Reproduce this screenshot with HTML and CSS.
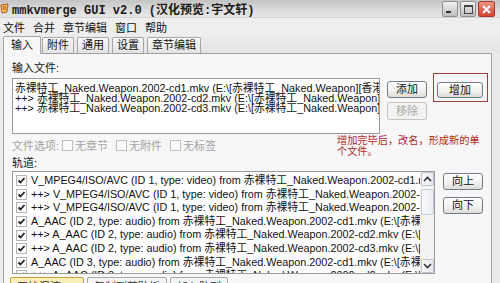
FILE: index.html
```html
<!DOCTYPE html>
<html lang="zh-CN">
<head>
  <meta charset="UTF-8">
  <title>mmkvmerge GUI v2.0</title>
  <link rel="stylesheet" href="styles.css">
</head>
<body>
  <div class="window">
    <div class="titlebar">
      <svg class="app-icon" width="9" height="11" viewBox="0 0 9 11">
        <path d="M1 2 L8 1 L7 9 L2 10 Z" fill="#f3c54a" stroke="#b7572c" stroke-width="1"/>
        <path d="M3 4 L6 4 M3 6 L6 6" stroke="#c0392b" stroke-width="1"/>
      </svg>
      <span class="title">mmkvmerge GUI v2.0 (汉化预览:宇文轩)</span>
      <div class="caption-btns">
        <span class="cap min"><i></i></span>
        <span class="cap max"><i></i></span>
        <span class="cap close">
          <svg width="11" height="11" viewBox="0 0 11 11"><path d="M2 2 L9 9 M9 2 L2 9" stroke="#fff" stroke-width="2"/></svg>
        </span>
      </div>
    </div>

    <div class="menubar">
      <span>文件</span>
      <span>合并</span>
      <span>章节编辑</span>
      <span>窗口</span>
      <span>帮助</span>
    </div>

    <div class="tabs">
      <span class="tab active">输入</span>
      <span class="tab">附件</span>
      <span class="tab">通用</span>
      <span class="tab">设置</span>
      <span class="tab">章节编辑</span>
    </div>

    <div class="panel">
      <div class="label">输入文件:</div>
      <div class="files-row">
        <div class="listbox files">
          <div class="line">赤裸特工_Naked.Weapon.2002-cd1.mkv (E:\[赤裸特工_Naked.Weapon][香港..]</div>
          <div class="line">++&gt; 赤裸特工_Naked.Weapon.2002-cd2.mkv (E:\[赤裸特工_Naked.Weapon][香</div>
          <div class="line">++&gt; 赤裸特工_Naked.Weapon.2002-cd3.mkv (E:\[赤裸特工_Naked.Weapon][香</div>
        </div>
        <div class="btn-col">
          <button class="btn">添加</button>
          <button class="btn" disabled>移除</button>
        </div>
        <div class="mark-box">
          <button class="btn wide">增加</button>
        </div>
      </div>

      <div class="options">
        <span class="opt-label">文件选项:</span>
        <span class="opt"><span class="box"></span>无章节</span>
        <span class="opt"><span class="box"></span>无附件</span>
        <span class="opt"><span class="box"></span>无标签</span>
      </div>

      <div class="label tracks-label">轨道:</div>
      <div class="tracks-row">
        <div class="listbox tracks">
          <div class="rows">
            <div class="track"><span class="check"></span>V_MPEG4/ISO/AVC (ID 1, type: video) from 赤裸特工_Naked.Weapon.2002-cd1.mkv</div>
            <div class="track"><span class="check"></span>++&gt; V_MPEG4/ISO/AVC (ID 1, type: video) from 赤裸特工_Naked.Weapon.2002-cd2</div>
            <div class="track"><span class="check"></span>++&gt; V_MPEG4/ISO/AVC (ID 1, type: video) from 赤裸特工_Naked.Weapon.2002-cd3</div>
            <div class="track"><span class="check"></span>A_AAC (ID 2, type: audio) from 赤裸特工_Naked.Weapon.2002-cd1.mkv (E:\[赤裸特</div>
            <div class="track"><span class="check"></span>++&gt; A_AAC (ID 2, type: audio) from 赤裸特工_Naked.Weapon.2002-cd2.mkv (E:\[赤</div>
            <div class="track"><span class="check"></span>++&gt; A_AAC (ID 2, type: audio) from 赤裸特工_Naked.Weapon.2002-cd3.mkv (E:\[赤</div>
            <div class="track"><span class="check"></span>A_AAC (ID 3, type: audio) from 赤裸特工_Naked.Weapon.2002-cd1.mkv (E:\[赤裸特</div>
            <div class="track"><span class="check"></span>++&gt; A_AAC (ID 3, type: audio) from 赤裸特工_Naked.Weapon.2002-cd2.mkv (E:\[赤</div>
          </div>
          <div class="scrollbar">
            <span class="arrow">
              <svg width="9" height="6" viewBox="0 0 9 6"><path d="M1 5 L4.5 1.5 L8 5" fill="none" stroke="#333" stroke-width="1.6"/></svg>
            </span>
            <span class="thumb"></span>
            <span class="track-fill"></span>
            <span class="arrow">
              <svg width="9" height="6" viewBox="0 0 9 6"><path d="M1 1 L4.5 4.5 L8 1" fill="none" stroke="#333" stroke-width="1.6"/></svg>
            </span>
          </div>
        </div>
        <div class="btn-col move">
          <button class="btn">向上</button>
          <button class="btn">向下</button>
        </div>
      </div>

      <div class="bottom-tabs">
        <span class="btab hot">开始混流</span>
        <span class="btab">复制到剪贴板</span>
        <span class="btab">加入队列</span>
      </div>

      <div class="note">增加完毕后，改名，形成新的单<br>个文件。</div>
    </div>
  </div>
</body>
</html>
```

FILE: styles.css
```css
body {
  margin: 0;
  font-family: "Liberation Sans", "Noto Sans CJK SC", sans-serif;
  font-size: 11px;
  color: #111;
  background: #e9e9e9;
}
.window {
  width: 500px;
  height: 283px;
  overflow: hidden;
  background: #ebebeb;
}

/* title bar */
.titlebar {
  height: 18px;
  display: flex;
  align-items: center;
  background: linear-gradient(to bottom, #c4c4c4, #dcdcdc 60%, #e6e6e6);
  border-bottom: 1px solid #d2d2d2;
  box-sizing: border-box;
}
.app-icon {
  margin: 0 3px 0 0;
}
.title {
  font-family: "Liberation Mono", "Noto Sans CJK SC", monospace;
  font-weight: bold;
  font-size: 12px;
  color: #1a1a1a;
}
.caption-btns {
  margin-left: auto;
  margin-right: 5px;
  display: flex;
  gap: 2px;
  height: 16px;
  align-self: flex-start;
  margin-top: 1px;
}
.cap {
  width: 16px;
  height: 16px;
  box-sizing: border-box;
  border: 1px solid #8d8d8d;
  border-radius: 2px;
  background: linear-gradient(to bottom, #f2f2f2, #bdbdbd);
  display: flex;
  align-items: center;
  justify-content: center;
  position: relative;
}
.cap.min i {
  position: absolute;
  left: 3px;
  bottom: 3px;
  width: 5px;
  height: 2px;
  background: #333;
}
.cap.max i {
  width: 7px;
  height: 6px;
  border: 1px solid #444;
  border-top-width: 2px;
}
.cap.close {
  width: 17px;
  border-color: #a6382c;
  background: linear-gradient(to bottom, #f19282, #d2432f);
}

/* menu */
.menubar {
  height: 17px;
  display: flex;
  align-items: center;
  gap: 8px;
  padding-left: 3px;
  background: #eeeeee;
}

/* tabs */
.tabs {
  height: 18px;
  display: flex;
  align-items: flex-end;
  gap: 3px;
  padding-left: 3px;
  background: linear-gradient(to bottom, #ececec, #e4e4e4);
}
.tab {
  height: 15px;
  line-height: 14px;
  padding: 0 4px;
  border: 1px solid #a7a7a7;
  border-bottom: none;
  border-radius: 2px 2px 0 0;
  background: linear-gradient(to bottom, #fbfbfb, #e2e2e2);
}
.tab.active {
  height: 17px;
  line-height: 16px;
  padding: 0 7px;
  margin-right: -2px;
  margin-bottom: -1px;
  background: #f7f7f7;
  position: relative;
  z-index: 1;
}

/* tab page */
.panel {
  position: relative;
  margin-left: 3px;
  width: 489px;
  box-sizing: border-box;
  border: 1px solid #a0a0a0;
  background: #f7f7f7;
  padding: 8px 2px 0 8px;
}
.label {
  line-height: 12px;
  height: 12px;
}
.files-row {
  display: flex;
  align-items: flex-start;
  margin-top: 4px;
}
.listbox {
  background: #fff;
  border: 1px solid #9a9a9a;
  box-sizing: border-box;
  overflow: hidden;
  font-size: 10.8px;
}
.files {
  width: 368px;
  height: 56px;
  padding: 4px 2px;
  flex: none;
}
.line {
  line-height: 10px;
  height: 10px;
  white-space: nowrap;
}
.btn-col {
  display: flex;
  flex-direction: column;
  gap: 4px;
  margin: 3px 0 0 7px;
  width: 40px;
}
.btn {
  font-family: "Liberation Sans", "Noto Sans CJK SC", sans-serif;
  font-size: 11px;
  height: 17px;
  padding: 0;
  border: 1px solid #6f7d8c;
  border-radius: 3px;
  background: linear-gradient(to bottom, #ffffff, #f0f0ee 60%, #dcdcd6);
  color: #111;
  line-height: 15px;
}
.btn:disabled {
  border-color: #c4c4bd;
  color: #a8a8a8;
  background: #f2f2f0;
  height: 18px;
}
.mark-box {
  margin: -5px 0 0 6px;
  border: 1px solid #9c3f3a;
  padding: 8px 4px 3px 3px;
  display: flex;
}
.btn.wide {
  width: 46px;
  height: 16px;
}

/* file options */
.options {
  display: flex;
  align-items: center;
  height: 12px;
  margin-top: 5px;
  color: #a3a3a3;
}
.opt-label {
  margin-right: 3px;
}
.opt {
  display: flex;
  align-items: center;
  gap: 2px;
  margin-right: 8px;
}
.box {
  width: 9px;
  height: 9px;
  border: 1px solid #bdbdbd;
  background: #fbfbfb;
}
.tracks-label {
  margin-top: 6px;
}

/* tracks */
.tracks-row {
  display: flex;
  align-items: flex-start;
  margin-top: 2px;
}
.tracks {
  width: 423px;
  height: 103px;
  display: flex;
  flex: none;
}
.rows {
  flex: 1;
  min-width: 0;
  padding: 2px 0 0 3px;
  overflow: hidden;
}
.track {
  height: 13.6px;
  line-height: 13.6px;
  white-space: nowrap;
  display: flex;
  align-items: center;
  gap: 4px;
}
.check {
  flex: none;
  width: 9px;
  height: 9px;
  border: 1px solid #b4b4b4;
  background: #fff url("data:image/svg+xml,%3Csvg xmlns='http://www.w3.org/2000/svg' width='9' height='9'%3E%3Cpath d='M1.5 4.5 L3.5 6.5 L7.5 2' fill='none' stroke='%23222' stroke-width='1.8'/%3E%3C/svg%3E") no-repeat center;
}
.scrollbar {
  width: 13px;
  flex: none;
  display: flex;
  flex-direction: column;
  background: #f3f3f1;
  border-left: 1px solid #eee;
}
.arrow {
  height: 14px;
  box-sizing: border-box;
  border: 1px solid #bcc3cf;
  border-radius: 2px;
  background: linear-gradient(to right, #fdfdfd, #e5e8ee);
  display: flex;
  align-items: center;
  justify-content: center;
}
.thumb {
  height: 26px;
  margin-top: 3px;
  box-sizing: border-box;
  border: 1px solid #c6ccd6;
  border-radius: 2px;
  background: linear-gradient(to right, #fafafa, #e9ecf1);
}
.track-fill {
  flex: 1;
}
.move {
  margin: 2px 0 0 8px;
  gap: 7px;
}

/* partially visible bottom row */
.bottom-tabs {
  display: flex;
  gap: 3px;
  margin-top: 3px;
  margin-left: -2px;
}
.btab {
  height: 16px;
  line-height: 18px;
  padding: 0 6px;
  border: 1px solid #a8a8a8;
  border-radius: 2px;
  background: #f4f4f4;
  color: #333;
}
.btab.hot {
  width: 60px;
  border-color: #c9a23c;
  background: #fbefb8;
}

/* red annotation over the page */
.note {
  position: absolute;
  left: 333px;
  top: 81px;
  color: #b3261e;
  font-size: 10.2px;
  line-height: 11px;
  white-space: nowrap;
}
```
